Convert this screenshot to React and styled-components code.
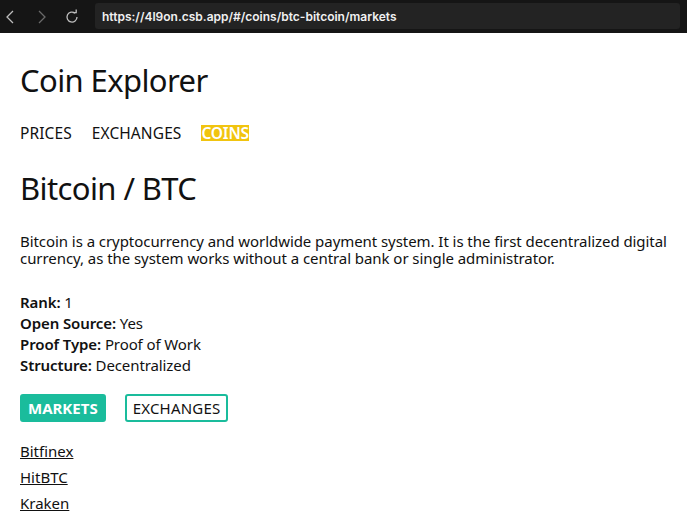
import React from 'react';
import styled, { createGlobalStyle } from 'styled-components';

const Global = createGlobalStyle`
  html, body { margin: 0; padding: 0; background: #fff; }
  body { font-family: "Noto Sans", "Open Sans", sans-serif; color: #111; }
`;

const coin = {
  name: 'Bitcoin',
  symbol: 'BTC',
  description:
    'Bitcoin is a cryptocurrency and worldwide payment system. It is the first decentralized digital currency, as the system works without a central bank or single administrator.',
  details: [
    ['Rank', '1'],
    ['Open Source', 'Yes'],
    ['Proof Type', 'Proof of Work'],
    ['Structure', 'Decentralized'],
  ],
  markets: ['Bitfinex', 'HitBTC', 'Kraken'],
};

export default function App() {
  return (
    <>
      <Global />
      <Chrome>
        <NavIcons>
          <svg width="14" height="16" viewBox="0 0 14 16">
            <path d="M9 2 L3 8 L9 14" fill="none" stroke="#bdbdbd" strokeWidth="1.3" />
          </svg>
          <svg width="14" height="16" viewBox="0 0 14 16">
            <path d="M5 2 L11 8 L5 14" fill="none" stroke="#6a6a6a" strokeWidth="1.3" />
          </svg>
          <svg width="16" height="16" viewBox="0 0 16 16">
            <path d="M13 8 A5 5 0 1 1 11.2 4.2" fill="none" stroke="#bdbdbd" strokeWidth="1.3" />
            <path d="M8.8 3.6 L12.2 3.6 L12.2 0.4" fill="none" stroke="#bdbdbd" strokeWidth="1.3" />
          </svg>
        </NavIcons>
        <Url>https://4l9on.csb.app/#/coins/btc-bitcoin/markets</Url>
      </Chrome>
      <Main>
        <Title>Coin Explorer</Title>
        <Nav>
          <NavLink>PRICES</NavLink>
          <NavLink>EXCHANGES</NavLink>
          <NavLink $active>COINS</NavLink>
        </Nav>
        <CoinTitle>{coin.name} / {coin.symbol}</CoinTitle>
        <Description>{coin.description}</Description>
        <Details>
          {coin.details.map(([k, v]) => (
            <div key={k}>
              <b>{k}:</b> {v}
            </div>
          ))}
        </Details>
        <Tabs>
          <Tab $active>MARKETS</Tab>
          <Tab>EXCHANGES</Tab>
        </Tabs>
        <Links>
          {coin.markets.map((m) => (
            <a key={m} href="#">{m}</a>
          ))}
        </Links>
      </Main>
    </>
  );
}

const Chrome = styled.div`
  height: 33px;
  background: #151515;
  display: flex;
  align-items: center;
  padding: 0 7px 0 4px;
  box-sizing: border-box;
`;

const NavIcons = styled.div`
  display: flex;
  align-items: center;
  gap: 16px;
  width: 91px;
  svg { display: block; }
`;

const Url = styled.div`
  flex: 1;
  height: 26px;
  margin-top: -1px;
  background: #232323;
  border-radius: 3px;
  display: flex;
  align-items: center;
  padding-left: 7px;
  color: #f0f0f0;
  font-family: "Inter", "Liberation Sans", sans-serif;
  font-size: 12px;
  font-weight: 600;
`;

const Main = styled.main`
  padding: 0 20px;
`;

const Title = styled.h1`
  margin: 27px 0 0;
  font-size: 31px;
  line-height: 40px;
  font-weight: 400;
  letter-spacing: -0.6px;
`;

const Nav = styled.nav`
  margin-top: 23px;
  display: flex;
  gap: 20px;
  font-size: 15.5px;
  line-height: 20px;
  letter-spacing: 0.1px;
`;

const NavLink = styled.span`
  ${({ $active }) =>
    $active
      ? `background: #f1c40f; color: #fff; font-weight: 600; line-height: 16px; align-self: center; letter-spacing: -0.2px;`
      : `color: #111;`}
`;

const CoinTitle = styled.h2`
  margin: 25px 0 0;
  font-size: 31px;
  line-height: 40px;
  font-weight: 400;
  letter-spacing: -0.6px;
`;

const Description = styled.p`
  margin: 25px 0 0;
  font-size: 15px;
  line-height: 17px;
  letter-spacing: -0.06px;
`;

const Details = styled.div`
  margin-top: 25px;
  font-size: 15px;
  line-height: 21px;
  letter-spacing: -0.1px;
  b { font-weight: 600; }
`;

const Tabs = styled.div`
  margin-top: 18px;
  display: flex;
  gap: 19px;
`;

const Tab = styled.button`
  height: 28px;
  padding: 0 6px;
  border-radius: 3px;
  font-family: inherit;
  font-size: 15px;
  cursor: pointer;
  border: 2px solid #1abc9c;
  background: ${({ $active }) => ($active ? '#1abc9c' : '#fff')};
  color: ${({ $active }) => ($active ? '#fff' : '#111')};
  font-weight: ${({ $active }) => ($active ? 700 : 400)};
  letter-spacing: ${({ $active }) => ($active ? '0' : '0.2px')};
`;

const Links = styled.div`
  margin-top: 16px;
  display: flex;
  flex-direction: column;
  font-size: 15px;
  line-height: 26px;
  a { color: #111; align-self: flex-start; }
`;
